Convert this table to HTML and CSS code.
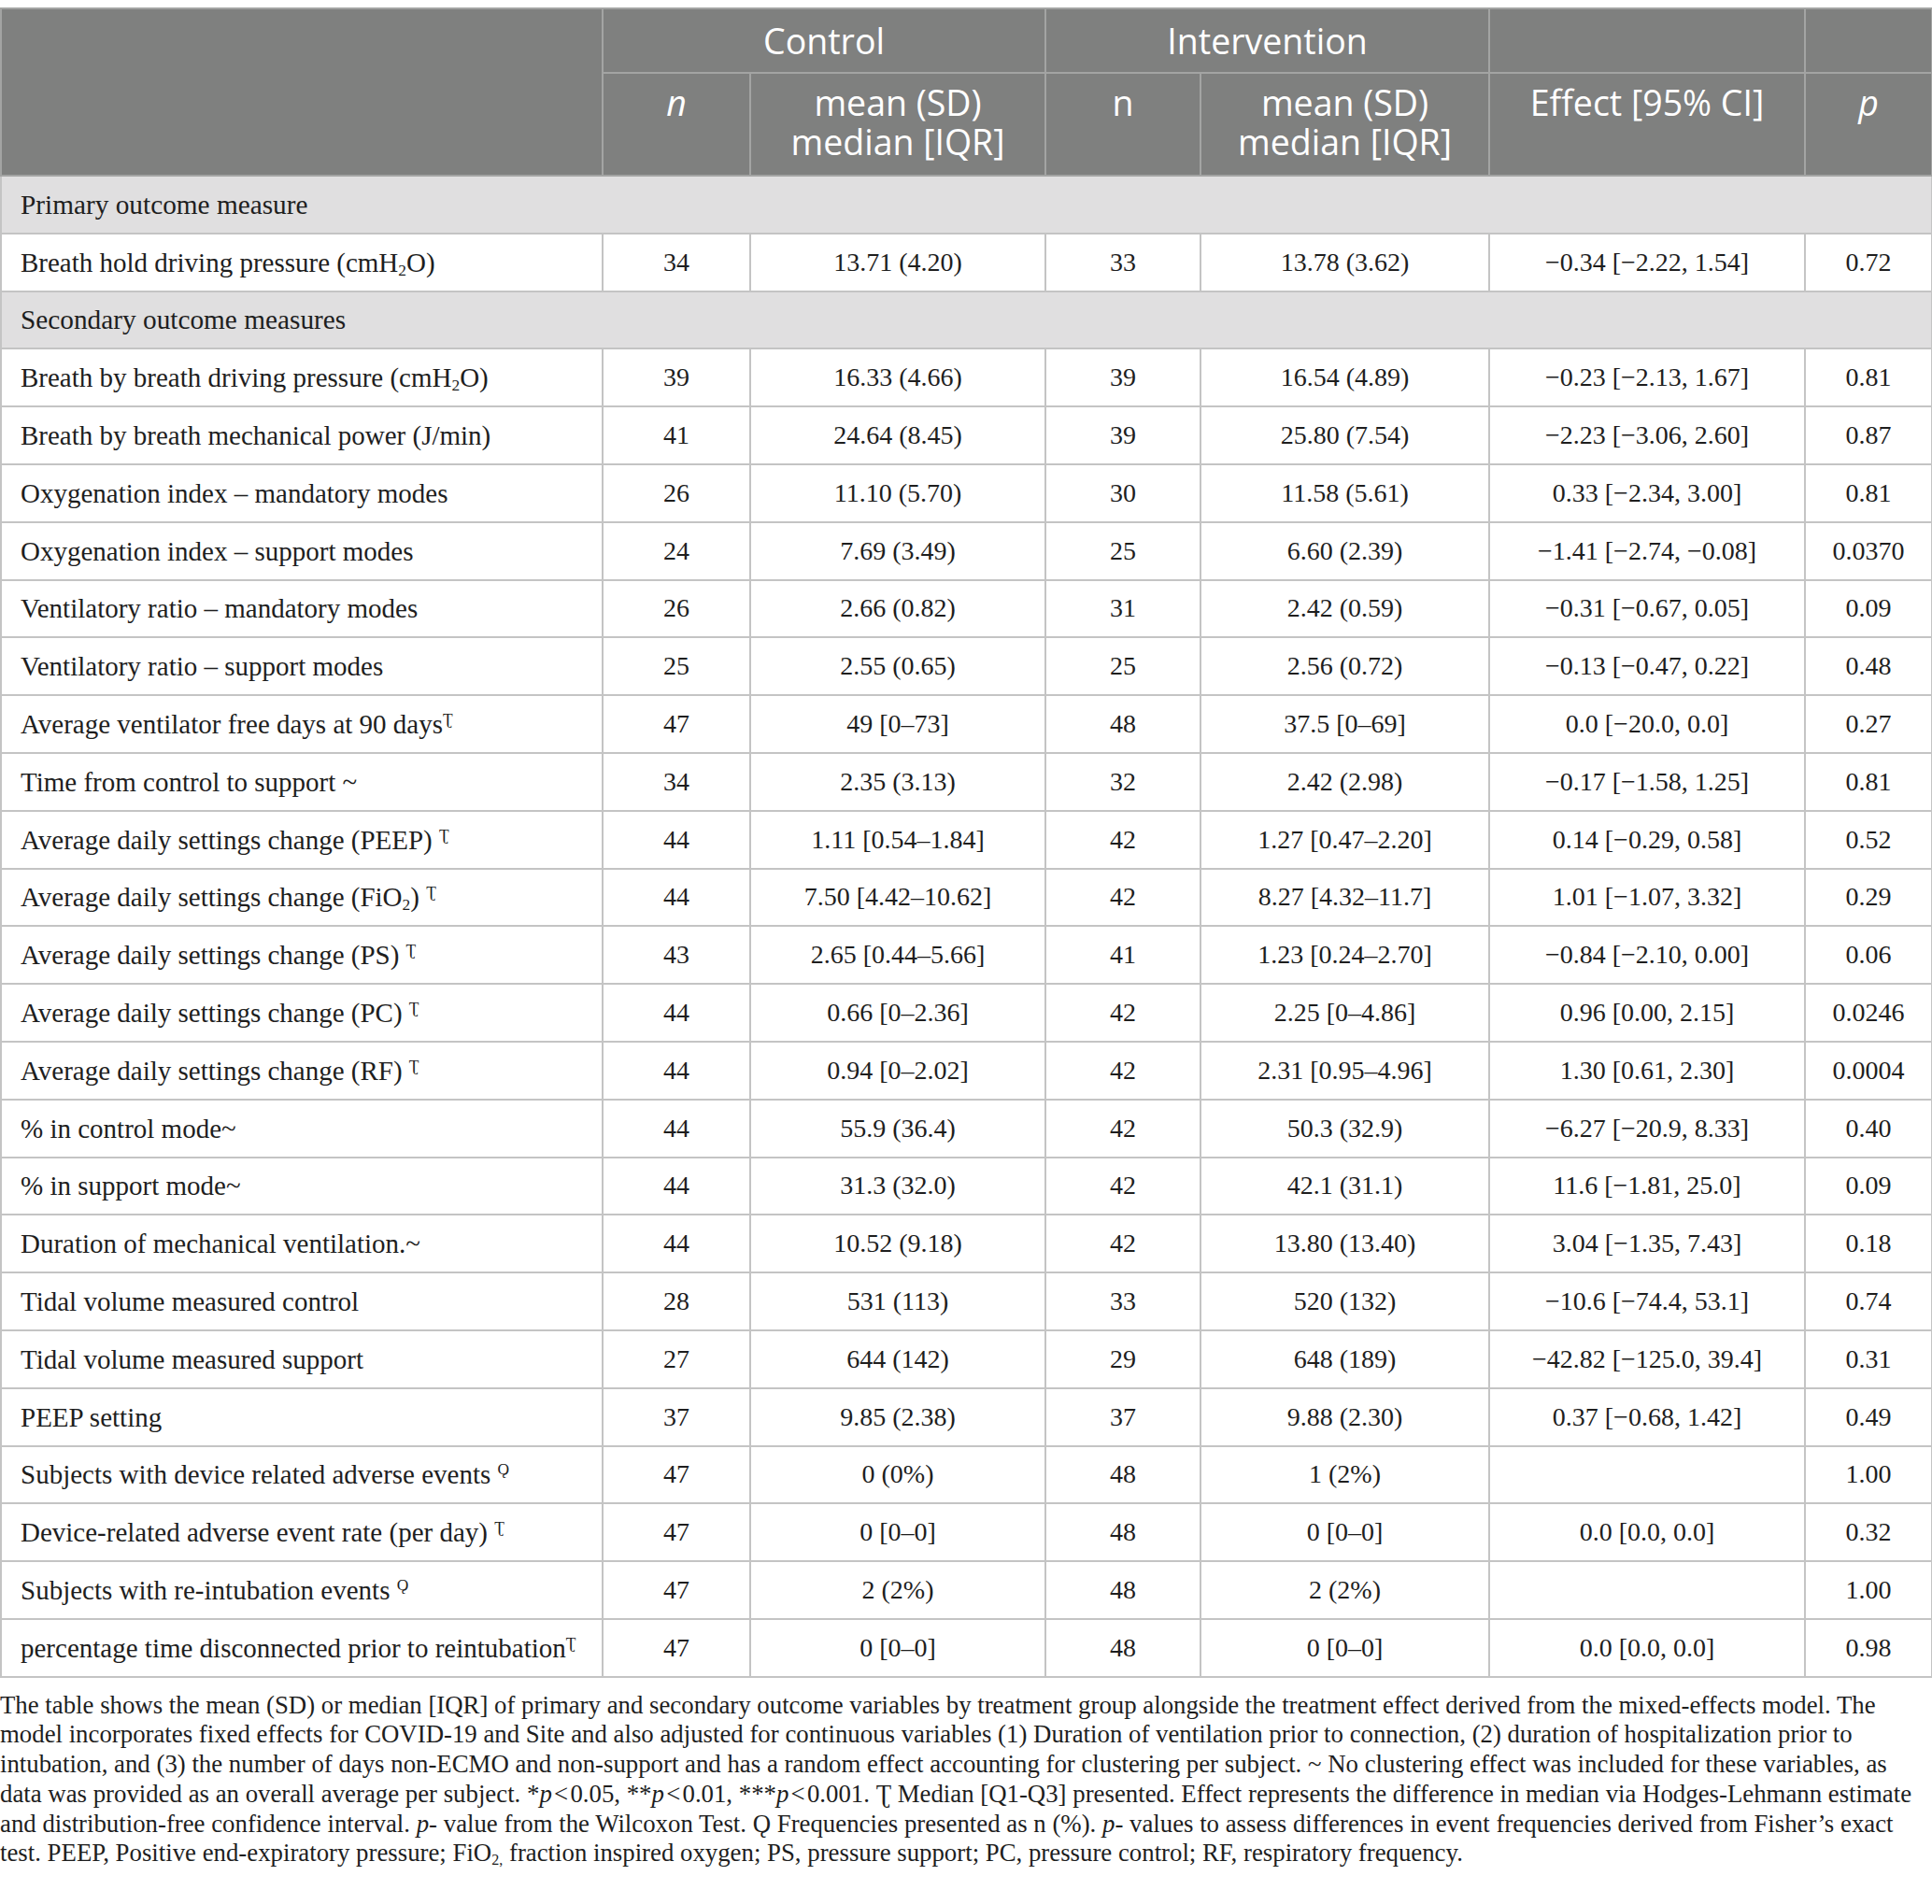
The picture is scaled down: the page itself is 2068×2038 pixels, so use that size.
FILE: index.html
```html
<!DOCTYPE html>
<html lang="en">
<head>
<meta charset="utf-8">
<title>Outcome measures</title>
<link rel="stylesheet" href="styles.css">
</head>
<body>
<table class="outcomes">
  <colgroup>
    <col class="c-label">
    <col class="c-n1">
    <col class="c-m1">
    <col class="c-n2">
    <col class="c-m2">
    <col class="c-eff">
    <col class="c-p">
  </colgroup>
  <thead>
    <tr class="h1">
      <th rowspan="2"></th>
      <th colspan="2">Control</th>
      <th colspan="2">Intervention</th>
      <th></th>
      <th></th>
    </tr>
    <tr class="h2">
      <th><i>n</i></th>
      <th>mean (SD)<br>median [IQR]</th>
      <th>n</th>
      <th>mean (SD)<br>median [IQR]</th>
      <th>Effect [95% CI]</th>
      <th><i>p</i></th>
    </tr>
  </thead>
  <tbody>
    <tr class="section"><td colspan="7">Primary outcome measure</td></tr>
    <tr><td class="label">Breath hold driving pressure (cmH<sub>2</sub>O)</td><td>34</td><td>13.71 (4.20)</td><td>33</td><td>13.78 (3.62)</td><td>−0.34 [−2.22, 1.54]</td><td>0.72</td></tr>
    <tr class="section"><td colspan="7">Secondary outcome measures</td></tr>
    <tr><td class="label">Breath by breath driving pressure (cmH<sub>2</sub>O)</td><td>39</td><td>16.33 (4.66)</td><td>39</td><td>16.54 (4.89)</td><td>−0.23 [−2.13, 1.67]</td><td>0.81</td></tr>
    <tr><td class="label">Breath by breath mechanical power (J/min)</td><td>41</td><td>24.64 (8.45)</td><td>39</td><td>25.80 (7.54)</td><td>−2.23 [−3.06, 2.60]</td><td>0.87</td></tr>
    <tr><td class="label">Oxygenation index – mandatory modes</td><td>26</td><td>11.10 (5.70)</td><td>30</td><td>11.58 (5.61)</td><td>0.33 [−2.34, 3.00]</td><td>0.81</td></tr>
    <tr><td class="label">Oxygenation index – support modes</td><td>24</td><td>7.69 (3.49)</td><td>25</td><td>6.60 (2.39)</td><td>−1.41 [−2.74, −0.08]</td><td>0.0370</td></tr>
    <tr><td class="label">Ventilatory ratio – mandatory modes</td><td>26</td><td>2.66 (0.82)</td><td>31</td><td>2.42 (0.59)</td><td>−0.31 [−0.67, 0.05]</td><td>0.09</td></tr>
    <tr><td class="label">Ventilatory ratio – support modes</td><td>25</td><td>2.55 (0.65)</td><td>25</td><td>2.56 (0.72)</td><td>−0.13 [−0.47, 0.22]</td><td>0.48</td></tr>
    <tr><td class="label">Average ventilator free days at 90 days<sup>Ʈ</sup></td><td>47</td><td>49 [0–73]</td><td>48</td><td>37.5 [0–69]</td><td>0.0 [−20.0, 0.0]</td><td>0.27</td></tr>
    <tr><td class="label">Time from control to support ~</td><td>34</td><td>2.35 (3.13)</td><td>32</td><td>2.42 (2.98)</td><td>−0.17 [−1.58, 1.25]</td><td>0.81</td></tr>
    <tr><td class="label">Average daily settings change (PEEP) <sup>Ʈ</sup></td><td>44</td><td>1.11 [0.54–1.84]</td><td>42</td><td>1.27 [0.47–2.20]</td><td>0.14 [−0.29, 0.58]</td><td>0.52</td></tr>
    <tr><td class="label">Average daily settings change (FiO<sub>2</sub>) <sup>Ʈ</sup></td><td>44</td><td>7.50 [4.42–10.62]</td><td>42</td><td>8.27 [4.32–11.7]</td><td>1.01 [−1.07, 3.32]</td><td>0.29</td></tr>
    <tr><td class="label">Average daily settings change (PS) <sup>Ʈ</sup></td><td>43</td><td>2.65 [0.44–5.66]</td><td>41</td><td>1.23 [0.24–2.70]</td><td>−0.84 [−2.10, 0.00]</td><td>0.06</td></tr>
    <tr><td class="label">Average daily settings change (PC) <sup>Ʈ</sup></td><td>44</td><td>0.66 [0–2.36]</td><td>42</td><td>2.25 [0–4.86]</td><td>0.96 [0.00, 2.15]</td><td>0.0246</td></tr>
    <tr><td class="label">Average daily settings change (RF) <sup>Ʈ</sup></td><td>44</td><td>0.94 [0–2.02]</td><td>42</td><td>2.31 [0.95–4.96]</td><td>1.30 [0.61, 2.30]</td><td>0.0004</td></tr>
    <tr><td class="label">% in control mode~</td><td>44</td><td>55.9 (36.4)</td><td>42</td><td>50.3 (32.9)</td><td>−6.27 [−20.9, 8.33]</td><td>0.40</td></tr>
    <tr><td class="label">% in support mode~</td><td>44</td><td>31.3 (32.0)</td><td>42</td><td>42.1 (31.1)</td><td>11.6 [−1.81, 25.0]</td><td>0.09</td></tr>
    <tr><td class="label">Duration of mechanical ventilation.~</td><td>44</td><td>10.52 (9.18)</td><td>42</td><td>13.80 (13.40)</td><td>3.04 [−1.35, 7.43]</td><td>0.18</td></tr>
    <tr><td class="label">Tidal volume measured control</td><td>28</td><td>531 (113)</td><td>33</td><td>520 (132)</td><td>−10.6 [−74.4, 53.1]</td><td>0.74</td></tr>
    <tr><td class="label">Tidal volume measured support</td><td>27</td><td>644 (142)</td><td>29</td><td>648 (189)</td><td>−42.82 [−125.0, 39.4]</td><td>0.31</td></tr>
    <tr><td class="label">PEEP setting</td><td>37</td><td>9.85 (2.38)</td><td>37</td><td>9.88 (2.30)</td><td>0.37 [−0.68, 1.42]</td><td>0.49</td></tr>
    <tr><td class="label">Subjects with device related adverse events <sup>Ǫ</sup></td><td>47</td><td>0 (0%)</td><td>48</td><td>1 (2%)</td><td></td><td>1.00</td></tr>
    <tr><td class="label">Device-related adverse event rate (per day) <sup>Ʈ</sup></td><td>47</td><td>0 [0–0]</td><td>48</td><td>0 [0–0]</td><td>0.0 [0.0, 0.0]</td><td>0.32</td></tr>
    <tr><td class="label">Subjects with re-intubation events <sup>Ǫ</sup></td><td>47</td><td>2 (2%)</td><td>48</td><td>2 (2%)</td><td></td><td>1.00</td></tr>
    <tr><td class="label">percentage time disconnected prior to reintubation<sup>Ʈ</sup></td><td>47</td><td>0 [0–0]</td><td>48</td><td>0 [0–0]</td><td>0.0 [0.0, 0.0]</td><td>0.98</td></tr>
  </tbody>
</table>
<p class="caption">The table shows the mean (SD) or median [IQR] of primary and secondary outcome variables by treatment group alongside the treatment effect derived from the mixed-effects model. The<br>model incorporates fixed effects for COVID-19 and Site and also adjusted for continuous variables (1) Duration of ventilation prior to connection, (2) duration of hospitalization prior to<br>intubation, and (3) the number of days non-ECMO and non-support and has a random effect accounting for clustering per subject. ~ No clustering effect was included for these variables, as<br>data was provided as an overall average per subject. *<i>p</i>&#8202;&lt;&#8202;0.05, **<i>p</i>&#8202;&lt;&#8202;0.01, ***<i>p</i>&#8202;&lt;&#8202;0.001. Ʈ Median [Q1-Q3] presented. Effect represents the difference in median via Hodges-Lehmann estimate<br>and distribution-free confidence interval. <i>p</i>- value from the Wilcoxon Test. Ǫ Frequencies presented as n (%). <i>p</i>- values to assess differences in event frequencies derived from Fisher’s exact<br>test. PEEP, Positive end-expiratory pressure; FiO<sub>2,</sub> fraction inspired oxygen; PS, pressure support; PC, pressure control; RF, respiratory frequency.</p>
</body>
</html>
```

FILE: styles.css
```css
html, body {
  background: #ffffff;
}

body {
  margin: 8px 0 0 0;
}

.outcomes {
  border-collapse: collapse;
  table-layout: fixed;
  width: 2067px;
  font-family: "Liberation Serif", "Times New Roman", serif;
  font-size: 28px;
  color: #1e1e1e;
}

.c-label { width: 644px; }
.c-n1 { width: 158px; }
.c-m1 { width: 316px; }
.c-n2 { width: 166px; }
.c-m2 { width: 309px; }
.c-eff { width: 338px; }
.c-p { width: 136px; }

.outcomes thead th {
  background: #7f807f;
  color: #ffffff;
  font-family: "Open Sans", "Noto Sans", sans-serif;
  font-weight: normal;
  font-size: 37.5px;
  line-height: 42px;
  border: 2px solid #a3a4a3;
  padding: 0 6px;
  text-align: center;
}

.outcomes thead tr.h1 {
  height: 69px;
}

.outcomes thead tr.h1 th {
  vertical-align: middle;
}

.outcomes thead tr.h2 {
  height: 110px;
}

.outcomes thead tr.h2 th {
  vertical-align: top;
  padding-top: 10px;
}

.outcomes tbody tr {
  height: 61.8px;
}

.outcomes tbody td {
  border: 2px solid #c4c4c4;
  padding: 0 12px;
  text-align: center;
  vertical-align: middle;
  line-height: 32px;
  white-space: nowrap;
}

.outcomes tbody td.label {
  text-align: left;
  padding-left: 20px;
  font-size: 29px;
}

.outcomes tbody tr.section td {
  background: #e0dfe0;
  text-align: left;
  padding-left: 20px;
  font-size: 29.3px;
}

.outcomes sub {
  font-size: 0.6em;
  vertical-align: -0.25em;
  line-height: 0;
}

.outcomes sup {
  font-size: 0.6em;
  vertical-align: 0.55em;
  line-height: 0;
}

.caption {
  margin: 14px 0 0 0;
  font-family: "Liberation Serif", "Times New Roman", serif;
  font-size: 26.8px;
  line-height: 31.7px;
  color: #1e1e1e;
  white-space: nowrap;
}

.caption sub {
  font-size: 0.6em;
  vertical-align: -0.25em;
  line-height: 0;
}
```
